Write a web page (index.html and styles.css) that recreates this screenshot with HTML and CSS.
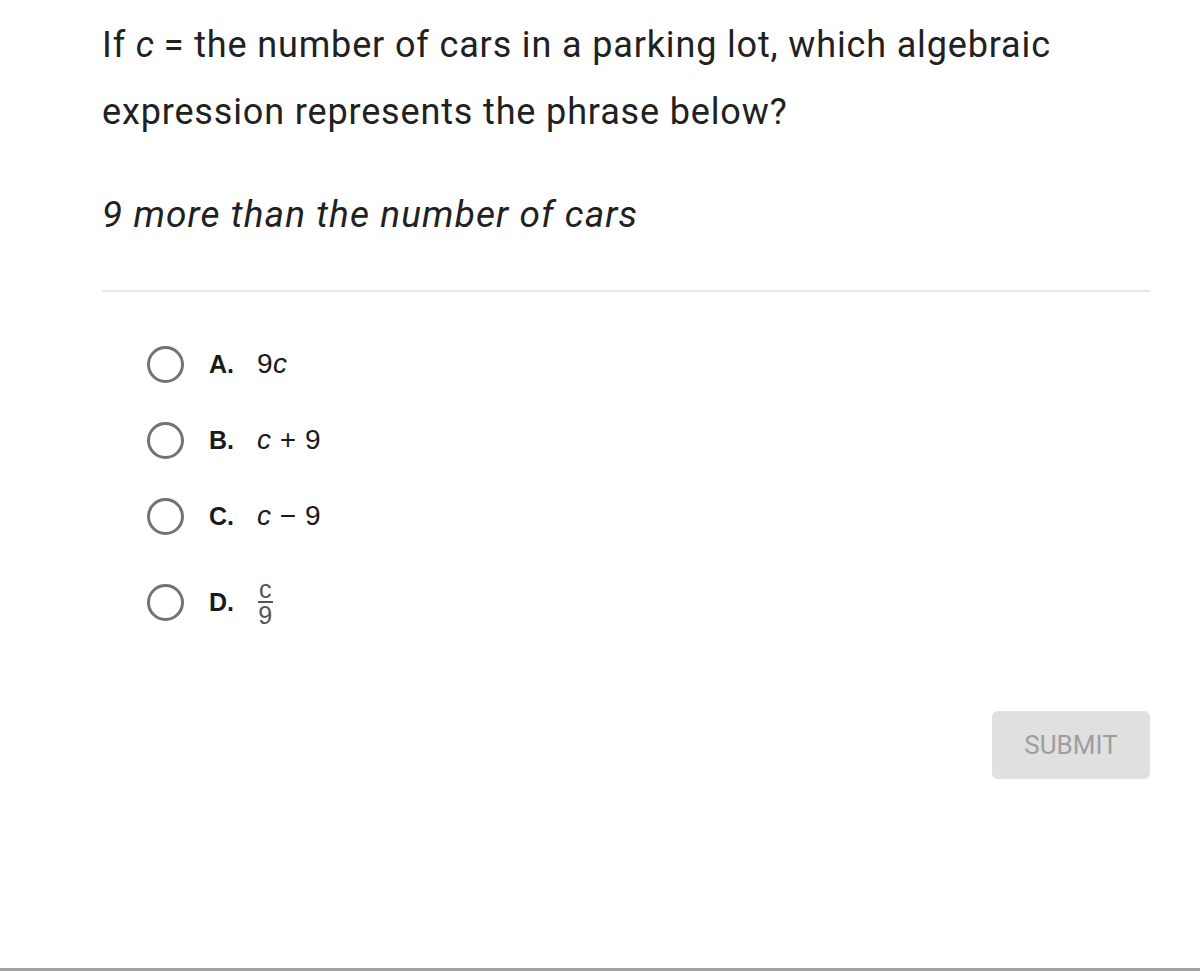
FILE: index.html
```html
<!DOCTYPE html>
<html lang="en">
<head>
<meta charset="utf-8">
<title>Question</title>
<link rel="stylesheet" href="styles.css">
</head>
<body>
<div class="screen">
  <main class="quiz">
    <p class="question">If <i class="var">c</i> = the number of cars in a parking lot, which algebraic expression represents the phrase below?</p>
    <p class="phrase">9 more than the number of cars</p>
    <hr class="divider">
    <ul class="options">
      <li class="option"><span class="radio"></span><span class="letter">A.</span><span class="answer">9<i>c</i></span></li>
      <li class="option"><span class="radio"></span><span class="letter">B.</span><span class="answer"><i>c</i> + 9</span></li>
      <li class="option"><span class="radio"></span><span class="letter">C.</span><span class="answer"><i>c</i> &minus; 9</span></li>
      <li class="option option-tall"><span class="radio"></span><span class="letter">D.</span><span class="answer frac"><span class="num">c</span><span class="den">9</span></span></li>
    </ul>
    <div class="actions"><button class="submit" type="button">SUBMIT</button></div>
  </main>
</div>
</body>
</html>
```

FILE: styles.css
```css
html, body {
  margin: 0;
  padding: 0;
  background: #ffffff;
}

.screen {
  min-height: 100vh;
  box-sizing: border-box;
  border-bottom: 3px solid #a3a3a3;
}

.quiz {
  padding: 12px 50px 0 102px;
  font-family: Roboto, "Liberation Sans", sans-serif;
  color: #212121;
}

.question {
  margin: 0;
  font-size: 36px;
  letter-spacing: 0.85px;
  line-height: 67px;
  max-width: 1000px;
}

.question .var {
  font-style: italic;
  letter-spacing: 0;
}

.phrase {
  margin: 49px 0 0 0;
  font-size: 37px;
  letter-spacing: 1.1px;
  line-height: 40px;
  font-style: italic;
}

.divider {
  margin: 55px 0 0 0;
  border: none;
  border-top: 2px solid #e8e8e8;
  height: 0;
}

.options {
  list-style: none;
  margin: 34px 0 0 0;
  padding: 0;
}

.option {
  display: flex;
  align-items: center;
  height: 76px;
  padding-left: 45px;
  font-family: "Liberation Sans", Arial, sans-serif;
  color: #1a1a1a;
}

.option-tall {
  height: 96px;
}

.radio {
  width: 31px;
  height: 31px;
  border: 3px solid #737373;
  border-radius: 50%;
  flex: none;
}

.letter {
  margin-left: 25px;
  font-weight: bold;
  font-size: 25px;
  width: 48px;
}

.answer {
  font-size: 28px;
  letter-spacing: 0.5px;
}

.answer i {
  font-style: italic;
}

.frac {
  display: inline-flex;
  flex-direction: column;
  align-items: center;
  font-size: 25px;
  line-height: 21px;
  margin-left: 1px;
  color: #555;
}

.frac .num {
  border-bottom: 2px solid #555;
  padding: 0 1px 1px;
}

.frac .den {
  padding-top: 2px;
}

.actions {
  display: flex;
  justify-content: flex-end;
  margin-top: 61px;
}

.submit {
  width: 158px;
  height: 68px;
  border: none;
  border-radius: 6px;
  background: #e0e0e0;
  color: #9e9e9e;
  font-family: Roboto, "Liberation Sans", sans-serif;
  font-size: 26px;
  padding: 0;
}
```
